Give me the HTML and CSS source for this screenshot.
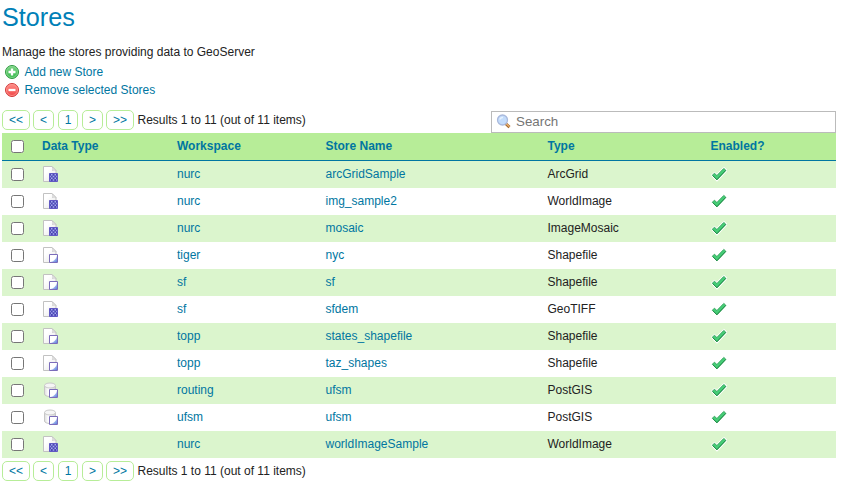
FILE: index.html
```html
<!DOCTYPE html>
<html lang="en">
<head>
<meta charset="utf-8">
<title>Stores</title>
<link rel="stylesheet" href="styles.css">
</head>
<body>
<svg class="defs" aria-hidden="true">
  <defs>
    <linearGradient id="g-add" x1="0" y1="0" x2="0" y2="1"><stop offset="0" stop-color="#7fd486"/><stop offset="1" stop-color="#35b84c"/></linearGradient>
    <linearGradient id="g-del" x1="0" y1="0" x2="0" y2="1"><stop offset="0" stop-color="#ff8f8a"/><stop offset="1" stop-color="#f04545"/></linearGradient>
    <linearGradient id="g-page" x1="0" y1="0" x2="1" y2="1"><stop offset="0.3" stop-color="#fff"/><stop offset="1" stop-color="#e4e4e4"/></linearGradient>
    <linearGradient id="g-cyl" x1="0" y1="0" x2="1" y2="0"><stop offset="0" stop-color="#dedede"/><stop offset="0.35" stop-color="#fff"/><stop offset="1" stop-color="#d2d2d2"/></linearGradient>
    <linearGradient id="g-vec" x1="0" y1="0" x2="1" y2="1"><stop offset="0.3" stop-color="#dde6fb"/><stop offset="1" stop-color="#5c80dc"/></linearGradient>
    <symbol id="page" viewBox="0 0 16 16"><path d="M1.500.5h8.500l4 4v11H1.500z" fill="url(#g-page)" stroke="#c2c2c2"/><path d="M10 .5c1 1.500 1 2.500.5 4 1.500-.5 2.500-.5 3.500 0z" fill="#ececec" stroke="#c4c4c4" stroke-width=".8"/></symbol>
    <symbol id="vec" viewBox="0 0 16 16"><path d="M7.500 7.500h8v8h-8z" fill="#fff" stroke="#7b6cba"/><path d="M15 8.500V15H8.500c3.500-.8 5.700-3 6.500-6.500z" fill="url(#g-vec)"/></symbol>
    <symbol id="raster" viewBox="0 0 16 16"><use href="#page"/><path d="M7.500 7.500h8v8h-8z" fill="#4c46b4" stroke="#6259c4"/><path d="M9 8h1.500v1.500H9zM12.500 8H14v1.500h-1.500zM10.700 9.700h1.600v1.600h-1.600zM9 11.500h1.500V13H9zM12.500 11.500H14V13h-1.500zM10.700 13.200h1.600v1.600h-1.600zM8 9.700h.8v1.600H8zM14.200 9.700h.8v1.600h-.8zM8 13.200h.8v1.600H8zM14.200 13.200h.8v1.600h-.8z" fill="#a4acee"/></symbol>
    <symbol id="vector" viewBox="0 0 16 16"><use href="#page"/><use href="#vec"/></symbol>
    <symbol id="database" viewBox="0 0 16 16"><path d="M2.500 3.500v8.500c0 1.400 2.400 2.500 5.500 2.500s5.500-1.100 5.500-2.500V3.500" fill="url(#g-cyl)" stroke="#c6c6c6"/><ellipse cx="8" cy="3.500" rx="5.500" ry="2.500" fill="#f5f5f5" stroke="#cacaca"/><use href="#vec"/></symbol>
    <symbol id="tick" viewBox="0 0 16 16"><path d="M1.200 9.300l2.300-2.200 2.400 2.200 7-7.200 2.500 2.300-9.400 10z" fill="#fff" stroke="#fff" stroke-width="2"/><path d="M1.400 9.200l2-2 2.500 2.300 6.900-7.100 2.100 2-9 9.500z" fill="#45cd76" stroke="#2fa259" stroke-width=".9"/><path d="M1.700 9.700l4.200 4 8.800-9.300" fill="none" stroke="#1f8343" stroke-width=".8"/></symbol>
  </defs>
</svg>

<header>
  <h1>Stores</h1>
  <p class="intro">Manage the stores providing data to GeoServer</p>
  <ul class="actions">
    <li><svg class="icon" viewBox="0 0 16 16"><circle cx="8" cy="8" r="6.500" fill="url(#g-add)" stroke="#2f9a42"/><circle cx="8" cy="8" r="5.500" fill="none" stroke="#8ddb93" stroke-width=".8"/><path d="M8 4.500v7M4.500 8h7" stroke="#fff" stroke-width="2.300"/></svg><a>Add new Store</a></li>
    <li><svg class="icon" viewBox="0 0 16 16"><circle cx="8" cy="8" r="6.500" fill="url(#g-del)" stroke="#cf3a3a"/><circle cx="8" cy="8" r="5.500" fill="none" stroke="#ff9892" stroke-width=".8"/><path d="M4.500 8h7" stroke="#fff" stroke-width="2.300"/></svg><a>Remove selected Stores</a></li>
  </ul>
</header>

<div class="toolbar">
  <nav class="pager"><a>&lt;&lt;</a><a class="one">&lt;</a><a class="num">1</a><a class="one">&gt;</a><a>&gt;&gt;</a><span>Results 1 to 11 (out of 11 items)</span></nav>
  <label class="search">
    <svg viewBox="0 0 16 16"><path d="M9.500 9.500l4 3.700" stroke="#a5682c" stroke-width="3"/><path d="M10 9.500l3.500 3.200" stroke="#e7b070" stroke-width="1.300"/><circle cx="6.500" cy="6" r="5" fill="#c3dcfb" stroke="#a9b9dc" stroke-width="1.300"/><path d="M3.700 5.500c.5-1.500 1.800-2.200 3.300-2" fill="none" stroke="#e8f3ff" stroke-width="1.400"/></svg>
    <input type="text" placeholder="Search">
  </label>
</div>

<table>
  <colgroup><col class="c-check"><col class="c-data"><col class="c-work"><col class="c-name"><col class="c-type"><col></colgroup>
  <thead><tr><th><input type="checkbox"></th><th>Data Type</th><th>Workspace</th><th>Store Name</th><th>Type</th><th>Enabled?</th></tr></thead>
  <tbody>
    <tr><td><input type="checkbox"></td><td><svg class="icon"><use href="#raster"/></svg></td><td><a>nurc</a></td><td><a>arcGridSample</a></td><td>ArcGrid</td><td><svg class="icon"><use href="#tick"/></svg></td></tr>
    <tr><td><input type="checkbox"></td><td><svg class="icon"><use href="#raster"/></svg></td><td><a>nurc</a></td><td><a>img_sample2</a></td><td>WorldImage</td><td><svg class="icon"><use href="#tick"/></svg></td></tr>
    <tr><td><input type="checkbox"></td><td><svg class="icon"><use href="#raster"/></svg></td><td><a>nurc</a></td><td><a>mosaic</a></td><td>ImageMosaic</td><td><svg class="icon"><use href="#tick"/></svg></td></tr>
    <tr><td><input type="checkbox"></td><td><svg class="icon"><use href="#vector"/></svg></td><td><a>tiger</a></td><td><a>nyc</a></td><td>Shapefile</td><td><svg class="icon"><use href="#tick"/></svg></td></tr>
    <tr><td><input type="checkbox"></td><td><svg class="icon"><use href="#vector"/></svg></td><td><a>sf</a></td><td><a>sf</a></td><td>Shapefile</td><td><svg class="icon"><use href="#tick"/></svg></td></tr>
    <tr><td><input type="checkbox"></td><td><svg class="icon"><use href="#raster"/></svg></td><td><a>sf</a></td><td><a>sfdem</a></td><td>GeoTIFF</td><td><svg class="icon"><use href="#tick"/></svg></td></tr>
    <tr><td><input type="checkbox"></td><td><svg class="icon"><use href="#vector"/></svg></td><td><a>topp</a></td><td><a>states_shapefile</a></td><td>Shapefile</td><td><svg class="icon"><use href="#tick"/></svg></td></tr>
    <tr><td><input type="checkbox"></td><td><svg class="icon"><use href="#vector"/></svg></td><td><a>topp</a></td><td><a>taz_shapes</a></td><td>Shapefile</td><td><svg class="icon"><use href="#tick"/></svg></td></tr>
    <tr><td><input type="checkbox"></td><td><svg class="icon"><use href="#database"/></svg></td><td><a>routing</a></td><td><a>ufsm</a></td><td>PostGIS</td><td><svg class="icon"><use href="#tick"/></svg></td></tr>
    <tr><td><input type="checkbox"></td><td><svg class="icon"><use href="#database"/></svg></td><td><a>ufsm</a></td><td><a>ufsm</a></td><td>PostGIS</td><td><svg class="icon"><use href="#tick"/></svg></td></tr>
    <tr><td><input type="checkbox"></td><td><svg class="icon"><use href="#raster"/></svg></td><td><a>nurc</a></td><td><a>worldImageSample</a></td><td>WorldImage</td><td><svg class="icon"><use href="#tick"/></svg></td></tr>
  </tbody>
</table>

<nav class="pager bottom"><a>&lt;&lt;</a><a class="one">&lt;</a><a class="num">1</a><a class="one">&gt;</a><a>&gt;&gt;</a><span>Results 1 to 11 (out of 11 items)</span></nav>
</body>
</html>
```
FILE: styles.css
```css
* { box-sizing: border-box; }
body {
  margin: 0;
  padding: 0 5px 0 2px;
  height: 482px;
  overflow: hidden;
  background: #fff;
  color: #222;
  font: 12px/18px "Liberation Sans", Arial, sans-serif;
}
a { color: #0076a1; }
.defs { position: absolute; width: 0; height: 0; }
h1 {
  margin: 0;
  padding-top: 2px;
  color: #0080b7;
  font-size: 25.200px;
  font-weight: 400;
  line-height: 30px;
}
.intro { margin: 11px 0 0; }
.actions { margin: 2px 0 0; padding: 0 0 0 2px; list-style: none; }
.actions li { display: flex; align-items: center; gap: 4.500px; height: 18px; }
.icon { display: block; width: 16px; height: 16px; flex: none; }

.toolbar { display: flex; justify-content: space-between; margin-top: 11px; height: 23px; }
.pager { display: flex; align-items: flex-start; gap: 3px; }
.pager a {
  width: 28px;
  height: 20px;
  border: 1px solid #b7ed98;
  border-radius: 5px;
  line-height: 18px;
  text-align: center;
}
.pager .one { width: 21px; }
.pager .num { width: 20px; margin: 0 1px; }
.pager span { margin-left: .5px; line-height: 20px; }
.bottom { margin-top: 3px; }

.search {
  display: flex;
  align-items: center;
  width: 345px;
  height: 22px;
  margin-top: 1px;
  padding-left: 4px;
  border: 1px solid #bbb;
}
.search svg { width: 16px; height: 16px; flex: none; }
.search input {
  flex: 1;
  height: 18px;
  margin: -2px 0 0;
  padding: 0 4px;
  border: 0;
  outline: 0;
  font: 13.333px "Liberation Sans", Arial, sans-serif;
}

table { width: 834px; table-layout: fixed; border-collapse: separate; border-spacing: 0; }
.c-check { width: 40px; }
.c-data { width: 135px; }
.c-work { width: 148.500px; }
.c-name { width: 222px; }
.c-type { width: 163px; }
th, td { height: 27px; padding: 0 0 1px; text-align: left; vertical-align: middle; }
thead { background: #b7ed98; }
th { height: 28px; color: #0076a1; border-bottom: 1px solid #0076a1; }
tbody tr:nth-child(odd) { background: #dbf5cd; }
table input { display: block; width: 13px; height: 13px; margin: 1px 0 0 9px; }
```
